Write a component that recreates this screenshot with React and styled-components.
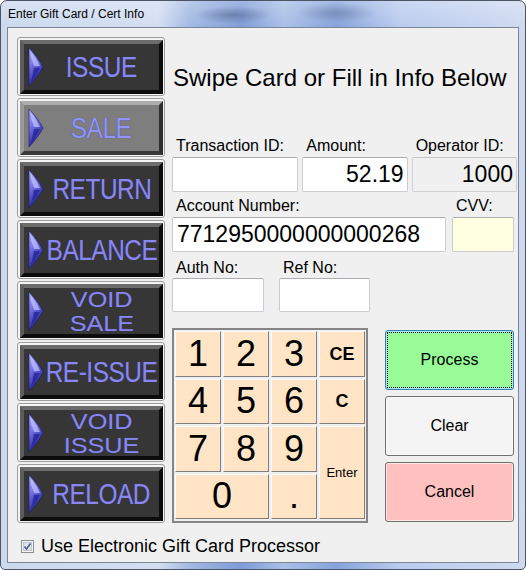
import styled, { createGlobalStyle } from 'styled-components'

const GlobalStyle = createGlobalStyle`
  html, body { margin: 0; padding: 0; background: #ffffff; }
  body { font-family: "Liberation Sans", Arial, sans-serif; color: #000; }
  * { box-sizing: border-box; }
`

const Window = styled.div`
  width: 526px;
  height: 570px;
  border: 1px solid #4b5566;
  border-radius: 7px 7px 5px 5px;
  overflow: hidden;
  display: flex;
  flex-direction: column;
  background:
    radial-gradient(ellipse 38px 9px at 232px 14px, rgba(60, 80, 120, 0.45), rgba(60, 80, 120, 0)),
    radial-gradient(ellipse 40px 10px at 335px 12px, rgba(60, 80, 120, 0.35), rgba(60, 80, 120, 0)),
    linear-gradient(180deg, rgba(255, 255, 255, 0.25), rgba(255, 255, 255, 0) 26px),
    linear-gradient(90deg, #cbd8ee 0%, #d3def1 30%, #a2b9e3 36%, #7f9cd7 46%, #a9bfe7 54%, #86a3dc 64%, #b9cbee 76%, #cfdaf1 100%);
`

const TitleBar = styled.div`
  height: 26px;
  padding-left: 7px;
  display: flex;
  align-items: center;
  font-size: 12px;
  color: #000;
`

const Client = styled.div`
  margin: 0 6px;
  height: 536px;
  border: 1px solid #7c8796;
  background: #f0f0f0;
  padding: 9px 0 0 9px;
`

const Main = styled.div`
  display: flex;
  gap: 7px;
`

const ActionColumn = styled.div`
  width: 148px;
  display: flex;
  flex-direction: column;
  gap: 2px;
`

const ActionFrame = styled.div`
  height: 59px;
  border: 1px solid #9c9c9c;
  border-radius: 3px;
  padding: 2px 1px 1px 2px;
  background: #f4f4f4;
`

const ActionFace = styled.div`
  height: 100%;
  display: flex;
  align-items: center;
  padding-left: 4px;
  border-style: solid;
  border-width: 4px;
  border-color: ${p => (p.$active ? '#adadad #2e2e2e #3a3a3a #9a9a9a' : '#6c6c6c #0c0c0c #0c0c0c #5c5c5c')};
  background: ${p => (p.$active ? '#7e7e7e' : '#363636')};

  svg { flex-shrink: 0; }
`

const ActionText = styled.div`
  flex: 1;
  min-width: 0;
  display: flex;
  flex-direction: column;
  align-items: center;
  color: ${p => (p.$active ? '#9294fa' : '#8987ef')};
  font-size: ${p => (p.$twoLine ? 21 : 29)}px;
  line-height: ${p => (p.$twoLine ? 24.5 : 32)}px;
  letter-spacing: ${p => (p.$twoLine ? 0 : -0.5)}px;
  text-shadow: 0 0 1px #3a3a8a;
`

const ActionLine = styled.div`
  white-space: nowrap;
  transform: scale(${p => (p.$twoLine ? '1.2, 1.08' : '0.84, 1')});
`

const FormColumn = styled.div`
  width: 345px;
  display: flex;
  flex-direction: column;
`

const Heading = styled.div`
  padding-top: 26px;
  height: 99px;
  font-size: 24px;
  line-height: 30px;
  padding-left: 1px;
  white-space: nowrap;
`

const FieldRow = styled.div`
  display: flex;
  gap: ${p => p.$gap}px;
  margin-top: ${p => p.$top || 0}px;
`

const Field = styled.div`
  width: ${p => p.$w}px;
  display: flex;
  flex-direction: column;
`

const Label = styled.div`
  height: 20px;
  line-height: 20px;
  font-size: 16px;
  padding-left: 4px;
  white-space: nowrap;
`

const Box = styled.div`
  height: ${p => p.$h || 35}px;
  margin-top: ${p => p.$gapTop ?? 1}px;
  border: 1px solid ${p => (p.$disabled ? '#cfd1d4' : '#c9ccd2')};
  border-top-color: ${p => (p.$disabled ? '#c2c4c7' : '#abadb3')};
  border-radius: 2px;
  background: ${p => p.$bg || '#ffffff'};
  font-size: 23px;
  display: flex;
  align-items: center;
  justify-content: ${p => (p.$right ? 'flex-end' : 'flex-start')};
  padding: 0 3px 0 4px;
`

const PadRow = styled.div`
  display: flex;
  margin-top: 16px;
  gap: 17px;
`

const Keypad = styled.div`
  width: 196px;
  height: 195px;
  border: 2px solid #858585;
  background: #efefef;
  padding: 1px;
  display: grid;
  grid-template-columns: repeat(4, 46px);
  grid-template-rows: repeat(4, 45.5px);
  gap: 2px;
`

const Key = styled.div`
  grid-column: ${p => p.$col || 'auto'};
  grid-row: ${p => p.$row || 'auto'};
  background: #ffe4c6;
  border: 1px solid;
  border-color: #fbfbfb #7e7e7e #7e7e7e #fbfbfb;
  display: flex;
  align-items: center;
  justify-content: center;
  font-size: ${p => p.$size || 36}px;
  font-weight: ${p => (p.$bold ? 700 : 400)};
  line-height: 1;
`

const ButtonColumn = styled.div`
  width: 129px;
  display: flex;
  flex-direction: column;
  gap: 6px;
  padding-top: 2px;
`

const CommandButton = styled.div`
  height: 60px;
  border: 1px solid ${p => (p.$focused ? '#3c7fb1' : '#707070')};
  border-radius: 3px;
  background: ${p => p.$bg};
  box-shadow: inset 0 0 0 1px ${p => (p.$focused ? '#a8e6f8' : 'rgba(255,255,255,0.6)')};
  outline: ${p => (p.$focused ? '1px dotted #000' : 'none')};
  outline-offset: -3px;
  display: flex;
  align-items: center;
  justify-content: center;
  font-size: 16px;
`

const Footer = styled.div`
  display: flex;
  align-items: center;
  gap: 7px;
  margin-top: 12px;
  padding-left: 4px;
  height: 22px;
  font-size: 18px;
`

const Gem = () => (
  <svg width="16" height="40" viewBox="0 0 16 40">
    <defs>
      <linearGradient id="gemFill" x1="0" y1="0" x2="0.4" y2="1">
        <stop offset="0" stopColor="#b4b4ff" />
        <stop offset="0.45" stopColor="#7272e6" />
        <stop offset="1" stopColor="#1f1f92" />
      </linearGradient>
    </defs>
    <path d="M1 1 Q11 12 15 20 Q11 28 1 39 Z" fill="url(#gemFill)" stroke="#1a1a6a" strokeWidth="0.6" />
    <path d="M2.5 4 Q9 12 12 19 L6 19 Q3 12 2.5 6 Z" fill="#c4c4ff" opacity="0.7" />
    <path d="M6 21 L12 21 Q8 29 2.5 36 Q5 28 6 21 Z" fill="#262698" opacity="0.8" />
  </svg>
)

const CheckBox = () => (
  <svg width="13" height="13" viewBox="0 0 13 13">
    <rect x="0.5" y="0.5" width="12" height="12" fill="#f4f4f4" stroke="#8e8f8f" />
    <rect x="2.5" y="2.5" width="8" height="8" fill="#dfe3ea" stroke="#c2c7cf" />
    <path d="M3.5 6.5 L5.5 9 L9.5 3.5" stroke="#4c5f90" strokeWidth="1.6" fill="none" />
  </svg>
)

const actions = [
  { lines: ['ISSUE'] },
  { lines: ['SALE'], active: true },
  { lines: ['RETURN'] },
  { lines: ['BALANCE'] },
  { lines: ['VOID', 'SALE'] },
  { lines: ['RE-ISSUE'] },
  { lines: ['VOID', 'ISSUE'] },
  { lines: ['RELOAD'] },
]

const App = () => {
  return (
    <>
      <GlobalStyle />
      <Window>
        <TitleBar>Enter Gift Card / Cert Info</TitleBar>
        <Client>
          <Main>
            <ActionColumn>
              {actions.map(a => {
                const twoLine = a.lines.length > 1
                return (
                  <ActionFrame key={a.lines.join(' ')}>
                    <ActionFace $active={a.active}>
                      <Gem />
                      <ActionText $active={a.active} $twoLine={twoLine}>
                        {a.lines.map(l => (
                          <ActionLine key={l} $twoLine={twoLine}>{l}</ActionLine>
                        ))}
                      </ActionText>
                    </ActionFace>
                  </ActionFrame>
                )
              })}
            </ActionColumn>

            <FormColumn>
              <Heading>Swipe Card or Fill in Info Below</Heading>

              <FieldRow $gap={4}>
                <Field $w={127}>
                  <Label>Transaction ID:</Label>
                  <Box />
                </Field>
                <Field $w={106}>
                  <Label>Amount:</Label>
                  <Box $right>52.19</Box>
                </Field>
                <Field $w={106}>
                  <Label>Operator ID:</Label>
                  <Box $right $disabled $bg="#f0f0f0">1000</Box>
                </Field>
              </FieldRow>

              <FieldRow $gap={6} $top={4}>
                <Field $w={274}>
                  <Label>Account Number:</Label>
                  <Box>7712950000000000268</Box>
                </Field>
                <Field $w={62}>
                  <Label>CVV:</Label>
                  <Box $bg="#ffffe1" />
                </Field>
              </FieldRow>

              <FieldRow $gap={15} $top={6}>
                <Field $w={92}>
                  <Label>Auth No:</Label>
                  <Box $h={34} $gapTop={0} />
                </Field>
                <Field $w={91}>
                  <Label>Ref No:</Label>
                  <Box $h={34} $gapTop={0} />
                </Field>
              </FieldRow>

              <PadRow>
                <Keypad>
                  <Key>1</Key>
                  <Key>2</Key>
                  <Key>3</Key>
                  <Key $size={18} $bold>CE</Key>
                  <Key>4</Key>
                  <Key>5</Key>
                  <Key>6</Key>
                  <Key $size={18} $bold>C</Key>
                  <Key>7</Key>
                  <Key>8</Key>
                  <Key>9</Key>
                  <Key $size={13} $row="3 / span 2" $col="4">Enter</Key>
                  <Key $col="1 / span 2">0</Key>
                  <Key>.</Key>
                </Keypad>
                <ButtonColumn>
                  <CommandButton $focused $bg="#98fb98">Process</CommandButton>
                  <CommandButton $bg="#f4f4f4">Clear</CommandButton>
                  <CommandButton $bg="#ffc0c0">Cancel</CommandButton>
                </ButtonColumn>
              </PadRow>
            </FormColumn>
          </Main>

          <Footer>
            <CheckBox />
            <span>Use Electronic Gift Card Processor</span>
          </Footer>
        </Client>
      </Window>
    </>
  )
}

export default App
